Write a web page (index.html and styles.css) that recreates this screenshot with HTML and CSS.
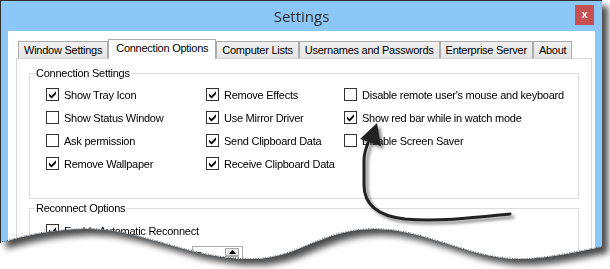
FILE: index.html
```html
<!DOCTYPE html>
<html lang="en">
<head>
<meta charset="utf-8">
<title>Settings</title>
<link rel="stylesheet" href="styles.css">
</head>
<body>
<div class="shot">
  <div class="window">
    <div class="titlebar">
      <span class="spacer"></span>
      <div class="title">Settings</div>
      <div class="close">x</div>
    </div>
    <div class="client">
      <div class="tabs">
        <div class="tab">Window Settings</div>
        <div class="tab active">Connection Options</div>
        <div class="tab">Computer Lists</div>
        <div class="tab">Usernames and Passwords</div>
        <div class="tab">Enterprise Server</div>
        <div class="tab">About</div>
      </div>
      <div class="panel">
        <fieldset class="group">
          <legend>Connection Settings</legend>
          <div class="grid">
            <label class="cb"><span class="box"><svg viewBox="0 0 11 11"><polygon points="2,4.5 4.5,7 9,2.2 9,5 4.5,9.5 2,7"/></svg></span>Show Tray Icon</label>
            <label class="cb"><span class="box"></span>Show Status Window</label>
            <label class="cb"><span class="box"></span>Ask permission</label>
            <label class="cb"><span class="box"><svg viewBox="0 0 11 11"><polygon points="2,4.5 4.5,7 9,2.2 9,5 4.5,9.5 2,7"/></svg></span>Remove Wallpaper</label>
            <label class="cb"><span class="box"><svg viewBox="0 0 11 11"><polygon points="2,4.5 4.5,7 9,2.2 9,5 4.5,9.5 2,7"/></svg></span>Remove Effects</label>
            <label class="cb"><span class="box"><svg viewBox="0 0 11 11"><polygon points="2,4.5 4.5,7 9,2.2 9,5 4.5,9.5 2,7"/></svg></span>Use Mirror Driver</label>
            <label class="cb"><span class="box"><svg viewBox="0 0 11 11"><polygon points="2,4.5 4.5,7 9,2.2 9,5 4.5,9.5 2,7"/></svg></span>Send Clipboard Data</label>
            <label class="cb"><span class="box"><svg viewBox="0 0 11 11"><polygon points="2,4.5 4.5,7 9,2.2 9,5 4.5,9.5 2,7"/></svg></span>Receive Clipboard Data</label>
            <label class="cb"><span class="box"></span>Disable remote user's mouse and keyboard</label>
            <label class="cb"><span class="box"><svg viewBox="0 0 11 11"><polygon points="2,4.5 4.5,7 9,2.2 9,5 4.5,9.5 2,7"/></svg></span>Show red bar while in watch mode</label>
            <label class="cb"><span class="box"></span>Disable Screen Saver</label>
          </div>
        </fieldset>
        <fieldset class="group reconnect">
          <legend>Reconnect Options</legend>
          <div class="inner">
            <label class="cb"><span class="box"><svg viewBox="0 0 11 11"><polygon points="2,4.5 4.5,7 9,2.2 9,5 4.5,9.5 2,7"/></svg></span>Enable Automatic Reconnect</label>
            <div class="spin">
              <span class="val">5</span>
              <div class="btns">
                <span class="sbtn"><svg viewBox="0 0 7 4"><polygon points="3.5,0 7,4 0,4"/></svg></span>
                <span class="sbtn"><svg viewBox="0 0 7 4"><polygon points="0,0 7,0 3.5,4"/></svg></span>
              </div>
            </div>
          </div>
        </fieldset>
      </div>
    </div>
    <svg class="overlay" viewBox="0 0 602 269" width="602" height="269">
      <defs>
        <filter id="ash" x="-20%" y="-20%" width="140%" height="140%">
          <feDropShadow dx="3" dy="3" stdDeviation="1.6" flood-color="#000" flood-opacity="0.45"/>
        </filter>
      </defs>
      <path class="edge" d="M602 247 C575 252 545 259 520 259 C470 259 425 229 375 229 C320 229 300 259 250 259 C190 259 140 229 90 229 C50 229 20 237 0 243"/>
      <g filter="url(#ash)">
        <path class="arrow" d="M510 214 C480 217 440 222 405 219 C378 216 364 205 364 185 L364 160 C364 153 366 148 368 143"/>
        <polygon class="head" points="377,123 381,146 360,139"/>
      </g>
    </svg>
  </div>
</div>
</body>
</html>
```

FILE: styles.css
```css
html, body {
  margin: 0;
  padding: 0;
}
body {
  width: 610px;
  height: 269px;
  overflow: hidden;
  background: #fff;
  font-family: "Liberation Sans", Arial, sans-serif;
  font-size: 11px;
  letter-spacing: -0.25px;
  color: #000;
}
.shot {
  width: 602px;
  height: 269px;
  overflow: hidden;
  filter: drop-shadow(6px 6px 3px rgba(0, 0, 0, 0.7));
}
.window {
  position: relative;
  box-sizing: border-box;
  width: 602px;
  height: 269px;
  overflow: hidden;
  background: #8dc7f7;
  border-top: 1px solid #2e2e2e;
  border-left: 1px solid #2e2e2e;
  display: flex;
  flex-direction: column;
  clip-path: path('M0 0 H602 V247 C575 252 545 259 520 259 C470 259 425 229 375 229 C320 229 300 259 250 259 C190 259 140 229 90 229 C50 229 20 237 0 243 Z');
}
.titlebar {
  height: 30px;
  flex: none;
  display: grid;
  grid-template-columns: 1fr auto 1fr;
  align-items: start;
}
.title {
  margin-top: 5px;
  font-family: "Open Sans", "Noto Sans", sans-serif;
  font-size: 15px;
  letter-spacing: 0;
  line-height: 20px;
  color: #2b2b2b;
}
.close {
  justify-self: end;
  margin-top: 4px;
  margin-right: 8px;
  width: 19px;
  height: 20px;
  background: #c75050;
  color: #fff;
  font-weight: bold;
  font-size: 11px;
  line-height: 18px;
  text-align: center;
}
.client {
  flex: 1;
  min-height: 0;
  overflow: hidden;
  margin: 0 7px;
  background: #fff;
  padding: 8px 3px 0 8px;
  display: flex;
  flex-direction: column;
}
.tabs {
  position: relative;
  z-index: 1;
  display: flex;
  align-items: flex-end;
  height: 20px;
  flex: none;
  margin-bottom: -1px;
  padding-left: 2px;
}
.tab {
  box-sizing: border-box;
  height: 17px;
  margin-bottom: 1px;
  padding: 0 5px;
  border: 1px solid #acacac;
  border-bottom: 0;
  background: linear-gradient(#f0f0f0, #e5e5e5);
  line-height: 16px;
  white-space: nowrap;
}
.tab.active {
  height: 20px;
  margin-bottom: 0;
  padding: 0 7px 3px;
  background: #fff;
  line-height: 16px;
}
.panel {
  flex: 1;
  min-height: 0;
  border: 1px solid #d5d5d5;
  padding: 8px 12px 0 12px;
}
.group {
  margin: 0;
  padding: 0;
  border: 1px solid #dcdcdc;
  min-width: 0;
}
.group legend {
  margin-left: 5px;
  padding: 0 1px;
  line-height: 13px;
}
.grid {
  display: grid;
  grid-auto-flow: column;
  grid-template-rows: repeat(4, 23px);
  grid-template-columns: 160px 138px auto;
  padding: 3px 0 23px 16px;
}
.cb {
  display: flex;
  align-items: center;
  gap: 5px;
  height: 23px;
  white-space: nowrap;
}
.box {
  box-sizing: border-box;
  width: 13px;
  height: 13px;
  border: 1px solid #333;
  background: #fff;
  flex: none;
}
.box svg {
  display: block;
  width: 11px;
  height: 11px;
  fill: #000;
}
.reconnect {
  margin-top: 3px;
}
.inner {
  padding: 4px 0 4px 16px;
}
.spin {
  box-sizing: border-box;
  display: flex;
  width: 51px;
  height: 20px;
  margin: 4px 0 0 146px;
  border: 1px solid #abadb3;
}
.val {
  padding-left: 3px;
  line-height: 18px;
}
.btns {
  margin: 1px 3px 0 auto;
  display: flex;
  flex-direction: column;
}
.sbtn {
  box-sizing: border-box;
  width: 14px;
  height: 8px;
  border: 1px solid #acacac;
  background: #e8e8e8;
  display: flex;
  align-items: center;
  justify-content: center;
}
.sbtn svg {
  width: 7px;
  height: 4px;
  fill: #000;
}
.overlay {
  position: absolute;
  left: -1px;
  top: -1px;
  pointer-events: none;
}
.edge {
  fill: none;
  stroke: #222;
  stroke-width: 1.6;
  stroke-dasharray: 1 1.5;
  opacity: 0.8;
}
.arrow {
  fill: none;
  stroke: #222;
  stroke-width: 3;
  stroke-linecap: round;
}
.head {
  fill: #222;
}
```
